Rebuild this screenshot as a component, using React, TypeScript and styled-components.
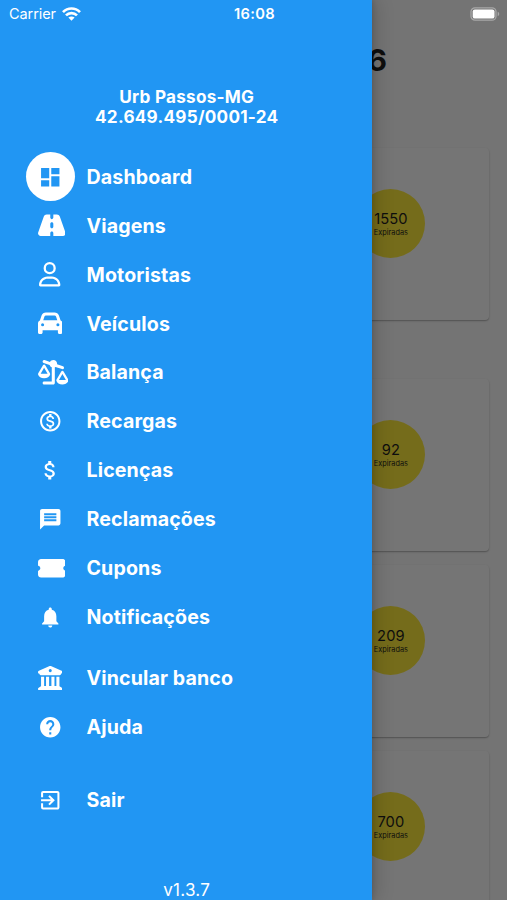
import React from "react";
import styled, { createGlobalStyle } from "styled-components";
import {
  MdDashboard,
  MdOutlineMonetizationOn,
  MdAttachMoney,
  MdMessage,
  MdNotifications,
  MdHelp,
  MdExitToApp,
} from "react-icons/md";
import {
  FaRoad,
  FaRegUser,
  FaCar,
  FaScaleUnbalancedFlip,
  FaTicketSimple,
  FaBuildingColumns,
} from "react-icons/fa6";
import type { IconType } from "react-icons";

const GlobalStyle = createGlobalStyle`
  *, *::before, *::after { box-sizing: border-box; }
  body { margin: 0; background: #737373; font-family: Inter, "Liberation Sans", sans-serif; }
`;

const Screen = styled.div`
  position: relative;
  width: 507px;
  height: 900px;
  overflow: hidden;
  background: #fcfcfc;
`;

const Page = styled.main`
  display: flex;
  flex-direction: column;
  padding: 0 18px;
`;

const PageTitle = styled.h1`
  margin: 0;
  height: 148px;
  padding: 42px 102px 0 0;
  text-align: right;
  font-size: 30px;
  line-height: 36px;
  font-weight: 700;
  color: #1f1f1f;
`;

const Card = styled.section<{ $gap: number }>`
  display: flex;
  justify-content: flex-end;
  flex: none;
  height: 172px;
  margin-bottom: ${({ $gap }) => $gap}px;
  padding: 41px 63.6px 0 0;
  border-radius: 4px;
  background: #fff;
  box-shadow: 0 1px 2px rgba(0, 0, 0, 0.22), 0 1px 1px rgba(0, 0, 0, 0.1);
`;

const Bubble = styled.div`
  display: flex;
  flex-direction: column;
  align-items: center;
  width: 69px;
  height: 69px;
  padding-top: 21px;
  border-radius: 50%;
  background: #ffeb3b;
  color: #1f1f1f;
`;

const Count = styled.span`
  font-size: 14.7px;
  line-height: 18px;
  letter-spacing: 0.1px;
`;

const Caption = styled.span`
  font-size: 7.35px;
  line-height: 9px;
`;

const Scrim = styled.div`
  position: absolute;
  inset: 0;
  background: rgba(0, 0, 0, 0.54);
`;

const Drawer = styled.aside`
  position: absolute;
  inset: 0 auto 0 0;
  display: flex;
  flex-direction: column;
  width: 372.4px;
  background: #2196f3;
  color: #fff;
  box-shadow: 4px 0 18px rgba(0, 0, 0, 0.16), 1px 0 5px rgba(0, 0, 0, 0.14);
`;

const Account = styled.header`
  height: 152.4px;
  padding: 86.6px 0 0 1px;
  text-align: center;
  font-size: 17.15px;
  line-height: 20.8px;
  font-weight: 700;
  letter-spacing: 0.25px;
`;

const Menu = styled.nav`
  display: flex;
  flex-direction: column;
  flex: 1;
`;

const Item = styled.a<{ $before?: number }>`
  display: flex;
  align-items: center;
  gap: 12px;
  height: 48.9px;
  margin-top: ${({ $before = 0 }) => $before}px;
  padding-left: 25.5px;
`;

const IconSlot = styled.span<{ $active?: boolean; $glyph: number }>`
  display: flex;
  align-items: center;
  justify-content: ${({ $glyph }) => ($glyph > 24.5 ? "flex-start" : "center")};
  width: 49px;
  height: 49px;
  padding-left: ${({ $glyph }) => ($glyph > 24.5 ? "12.2px" : "0")};
  border-radius: 50%;
  background: ${({ $active }) => ($active ? "#fff" : "transparent")};
  color: ${({ $active }) => ($active ? "#2196f3" : "#fff")};

  svg {
    flex: none;
    width: ${({ $glyph }) => $glyph}px;
    height: 24.5px;
  }
`;

const Label = styled.span`
  font-size: 19.6px;
  line-height: 24px;
  font-weight: 700;
  letter-spacing: 0.13px;
`;

const Version = styled.footer`
  height: 22.4px;
  padding-left: 1px;
  text-align: center;
  font-size: 17.1px;
  line-height: 23px;
  letter-spacing: 0.25px;
`;

const StatusBar = styled.div`
  position: absolute;
  inset: 0 0 auto 0;
  display: grid;
  grid-template-columns: 1fr auto 1fr;
  align-items: center;
  height: 27px;
  padding: 0 7px 0 9px;
  color: #fff;
  font-size: 14.7px;
`;

const Carrier = styled.span`
  display: flex;
  align-items: center;
  gap: 6px;
  font-size: 14.5px;
  letter-spacing: -0.08px;
`;

const Clock = styled.span`
  font-weight: 600;
  letter-spacing: 0.35px;
`;

const Battery = styled.svg`
  justify-self: end;
`;

type Entry = { icon: IconType; label: string; active?: boolean; glyph?: number; before?: number };

const entries: Entry[] = [
  { icon: MdDashboard, label: "Dashboard", active: true },
  { icon: FaRoad, label: "Viagens", glyph: 27.6 },
  { icon: FaRegUser, label: "Motoristas", glyph: 21.4 },
  { icon: FaCar, label: "Veículos" },
  { icon: FaScaleUnbalancedFlip, label: "Balança", glyph: 30.6 },
  { icon: MdOutlineMonetizationOn, label: "Recargas" },
  { icon: MdAttachMoney, label: "Licenças" },
  { icon: MdMessage, label: "Reclamações" },
  { icon: FaTicketSimple, label: "Cupons", glyph: 27.6 },
  { icon: MdNotifications, label: "Notificações" },
  { icon: FaBuildingColumns, label: "Vincular banco", before: 12.2 },
  { icon: MdHelp, label: "Ajuda" },
  { icon: MdExitToApp, label: "Sair", before: 24.5 },
];

const cards = [
  { count: 1550, gap: 58.6 },
  { count: 92, gap: 14 },
  { count: 209, gap: 14 },
  { count: 700, gap: 0 },
];

export default function App() {
  return (
    <Screen>
      <GlobalStyle />
      <Page>
        <PageTitle>6</PageTitle>
        {cards.map(({ count, gap }) => (
          <Card key={count} $gap={gap}>
            <Bubble>
              <Count>{count}</Count>
              <Caption>Expiradas</Caption>
            </Bubble>
          </Card>
        ))}
      </Page>
      <Scrim />
      <Drawer>
        <Account>
          Urb Passos-MG
          <br />
          42.649.495/0001-24
        </Account>
        <Menu>
          {entries.map(({ icon: Icon, label, active, glyph = 24.5, before }) => (
            <Item key={label} $before={before}>
              <IconSlot $active={active} $glyph={glyph}>
                <Icon />
              </IconSlot>
              <Label>{label}</Label>
            </Item>
          ))}
        </Menu>
        <Version>v1.3.7</Version>
      </Drawer>
      <StatusBar>
        <Carrier>
          Carrier
          <svg width="19" height="14" viewBox="0 0 19 14" fill="none" stroke="#fff" strokeWidth="2.7">
            <path d="M1 5.1C5.8.3 13.2.3 18 5.1" />
            <path d="M4 8.4c3-3 8-3 11 0" />
            <path d="M9.5 13.7 6.4 10.6c1.7-1.5 4.5-1.5 6.2 0Z" fill="#fff" stroke="none" />
          </svg>
        </Carrier>
        <Clock>16:08</Clock>
        <Battery width="30" height="14" viewBox="0 0 30 14">
          <rect x="1" y="0.8" width="25" height="12.4" rx="4" fill="none" stroke="#a8a8a8" strokeWidth="1.3" />
          <rect x="2.7" y="2.4" width="21.8" height="9.2" rx="2.2" fill="#fff" />
          <path d="M27.7 4.8c2 .7 2 3.7 0 4.4Z" fill="#a8a8a8" />
        </Battery>
      </StatusBar>
    </Screen>
  );
}
